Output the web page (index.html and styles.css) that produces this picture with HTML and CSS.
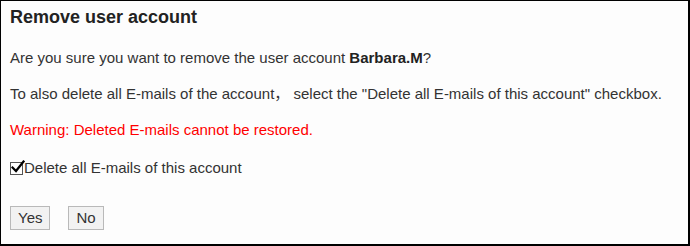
FILE: index.html
```html
<!DOCTYPE html>
<html lang="en">
<head>
<meta charset="utf-8">
<title>Remove user account</title>
<link rel="stylesheet" href="styles.css">
</head>
<body>
<div class="dialog">
  <h1 class="title">Remove user account</h1>
  <div class="content">
    <p class="line">Are you sure you want to remove the user account <b>Barbara.M</b>?</p>
    <p class="line">To also delete all E-mails of the account， select the "Delete all E-mails of this account" checkbox.</p>
    <p class="line warn">Warning: Deleted E-mails cannot be restored.</p>
    <label class="checkrow">
      <span class="checkbox" role="checkbox" aria-checked="true">
        <svg class="tick" width="14" height="14" viewBox="0 0 14 14"><path d="M1.5 7.5 L5 11 L12.5 1.5" fill="none" stroke="#000" stroke-width="2.2" stroke-linecap="square" stroke-linejoin="miter"/></svg>
      </span>Delete all E-mails of this account
    </label>
  </div>
  <div class="buttons">
    <button class="btn">Yes</button>
    <button class="btn">No</button>
  </div>
</div>
</body>
</html>
```

FILE: styles.css
```css
html, body {
  margin: 0;
  padding: 0;
  background: #ffffff;
}
body {
  font-family: "Liberation Sans", Arial, "Noto Sans CJK JP", sans-serif;
  color: #333333;
}
.dialog {
  box-sizing: border-box;
  width: 690px;
  height: 246px;
  border-style: solid;
  border-color: #000000;
  border-width: 1px 2px 2px 1px;
  background: #fdfdfd;
  padding: 5px 9px 0 9px;
}
.title {
  margin: 0;
  font-size: 18px;
  line-height: 22px;
  font-weight: bold;
  color: #222222;
}
.content {
  margin-top: 21px;
  display: flex;
  flex-direction: column;
  gap: 18px;
}
.line {
  margin: 0;
  font-size: 15px;
  line-height: 18px;
}
.line b {
  color: #222222;
}
.warn {
  color: #ff0000;
}
.checkrow {
  margin-top: 2px;
  display: flex;
  align-items: center;
  font-size: 15px;
  line-height: 18px;
}
.checkbox {
  position: relative;
  box-sizing: border-box;
  width: 13px;
  height: 13px;
  border: 1px solid #555555;
  background: #ffffff;
  margin-right: 1px;
  flex: none;
}
.tick {
  position: absolute;
  left: 0px;
  top: -3px;
}
.buttons {
  margin-top: 29px;
  display: flex;
  gap: 18px;
}
.btn {
  box-sizing: border-box;
  height: 24px;
  padding: 0 7px;
  border: 1px solid #b9b9b9;
  border-radius: 0;
  background: #f2f2f2;
  color: #333333;
  font-family: "Liberation Sans", Arial, sans-serif;
  font-size: 15px;
  line-height: 22px;
}
```
